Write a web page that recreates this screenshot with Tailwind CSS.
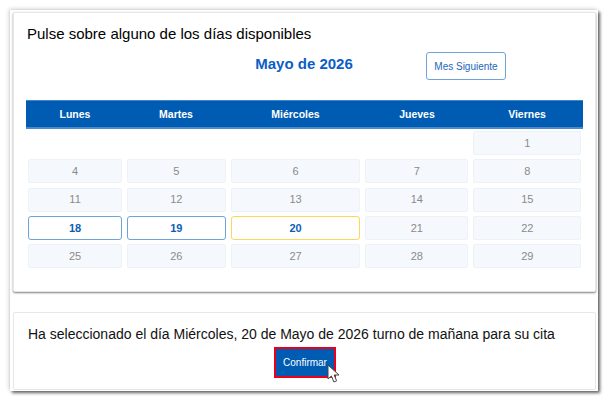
<!DOCTYPE html>
<html lang="es">
<head>
    <meta charset="UTF-8">
    <title>Calendario de citas</title>
    <script src="https://cdn.jsdelivr.net/npm/@tailwindcss/browser@4"></script>
</head>
<body class="bg-white font-['Liberation_Sans',Arial,sans-serif]">
    <div class="w-[609px] h-[402px] pt-[10px] pl-[10px] overflow-hidden">
        <div class="w-[588px] h-[381px] pt-[2px] pl-[3px] bg-white shadow-[2px_2px_3px_rgba(0,0,0,0.6),-1px_-1px_4px_rgba(0,0,0,0.18)]">
            <!-- Calendar card -->
            <div class="w-[583px] h-[280px] pt-[11px] px-[12px] bg-white border border-gray-200 rounded-[2px] shadow-[0_1px_2px_rgba(0,0,0,0.5)]">
                <p class="pl-[1px] text-[15px] leading-[20px] text-black">Pulse sobre alguno de los días disponibles</p>

                <div class="relative h-[48px] mt-[8px]">
                    <h2 class="w-[556px] mt-[1px] inline-block text-center text-[15px] leading-[22px] font-bold text-[#0b5ec4]">Mayo de 2026</h2>
                    <button class="absolute left-[400px] top-0 w-[80px] h-[28px] bg-white border border-[#6ea3d8] rounded-[3px] text-[10px] text-[#1e66b8]">Mes Siguiente</button>
                </div>

                <div class="grid grid-cols-[98px_104px_135px_108px_112px] w-[557px] h-[29px] pt-[1px] items-center bg-[#005cb3] border-t border-b-2 border-t-[#3f84c8] border-b-[#4a8bcb] text-[10.5px] font-bold text-white text-center">
                    <span>Lunes</span>
                    <span>Martes</span>
                    <span>Miércoles</span>
                    <span>Jueves</span>
                    <span>Viernes</span>
                </div>

                <div class="grid grid-cols-[93.5px_99px_129.5px_103px_108px] auto-rows-[24px] gap-x-[5px] gap-y-[4.3px] w-[557px] mt-[2px] pl-[2.3px] text-[11px] text-center">
                    <div class="col-start-5 flex items-center justify-center bg-[#f5f9fd] border border-[#edf2f7] rounded-[2px] text-[#8a8a8a]">1</div>

                    <div class="flex items-center justify-center bg-[#f5f9fd] border border-[#edf2f7] rounded-[2px] text-[#8a8a8a]">4</div>
                    <div class="flex items-center justify-center bg-[#f5f9fd] border border-[#edf2f7] rounded-[2px] text-[#8a8a8a]">5</div>
                    <div class="flex items-center justify-center bg-[#f5f9fd] border border-[#edf2f7] rounded-[2px] text-[#8a8a8a]">6</div>
                    <div class="flex items-center justify-center bg-[#f5f9fd] border border-[#edf2f7] rounded-[2px] text-[#8a8a8a]">7</div>
                    <div class="flex items-center justify-center bg-[#f5f9fd] border border-[#edf2f7] rounded-[2px] text-[#8a8a8a]">8</div>

                    <div class="flex items-center justify-center bg-[#f5f9fd] border border-[#edf2f7] rounded-[2px] text-[#8a8a8a]">11</div>
                    <div class="flex items-center justify-center bg-[#f5f9fd] border border-[#edf2f7] rounded-[2px] text-[#8a8a8a]">12</div>
                    <div class="flex items-center justify-center bg-[#f5f9fd] border border-[#edf2f7] rounded-[2px] text-[#8a8a8a]">13</div>
                    <div class="flex items-center justify-center bg-[#f5f9fd] border border-[#edf2f7] rounded-[2px] text-[#8a8a8a]">14</div>
                    <div class="flex items-center justify-center bg-[#f5f9fd] border border-[#edf2f7] rounded-[2px] text-[#8a8a8a]">15</div>

                    <div class="flex items-center justify-center bg-white border border-[#6ea3d8] rounded-[3px] font-bold text-[#0b5eb5]">18</div>
                    <div class="flex items-center justify-center bg-white border border-[#6ea3d8] rounded-[3px] font-bold text-[#0b5eb5]">19</div>
                    <div class="flex items-center justify-center bg-white border border-[#fbd85a] rounded-[3px] font-bold text-[#0b5eb5]">20</div>
                    <div class="flex items-center justify-center bg-[#f5f9fd] border border-[#edf2f7] rounded-[2px] text-[#8a8a8a]">21</div>
                    <div class="flex items-center justify-center bg-[#f5f9fd] border border-[#edf2f7] rounded-[2px] text-[#8a8a8a]">22</div>

                    <div class="flex items-center justify-center bg-[#f5f9fd] border border-[#edf2f7] rounded-[2px] text-[#8a8a8a]">25</div>
                    <div class="flex items-center justify-center bg-[#f5f9fd] border border-[#edf2f7] rounded-[2px] text-[#8a8a8a]">26</div>
                    <div class="flex items-center justify-center bg-[#f5f9fd] border border-[#edf2f7] rounded-[2px] text-[#8a8a8a]">27</div>
                    <div class="flex items-center justify-center bg-[#f5f9fd] border border-[#edf2f7] rounded-[2px] text-[#8a8a8a]">28</div>
                    <div class="flex items-center justify-center bg-[#f5f9fd] border border-[#edf2f7] rounded-[2px] text-[#8a8a8a]">29</div>
                </div>
            </div>

            <!-- Confirmation card -->
            <div class="w-[583px] h-[78px] mt-[20px] pt-[11px] pl-[14px] bg-white border border-gray-200 rounded-[2px]">
                <p class="text-[14px] leading-[20px] text-[#111]">Ha seleccionado el día Miércoles, 20 de Mayo de 2026 turno de mañana para su cita</p>
                <div class="relative w-[62px] h-[31px] mt-[3px] ml-[246px]">
                    <button class="w-full h-full bg-[#005cb3] border-2 border-[#ea0018] text-[10px] text-white">Confirmar</button>
                    <svg class="absolute left-[53px] top-[17px]" width="13" height="19" viewBox="0 0 13 19">
                        <path d="M1 1 L1 15 L4.4 12 L6.9 18 L9.6 16.8 L7.2 11 L12 11 Z" fill="#fff" stroke="#444" stroke-width="1" stroke-linejoin="round"/>
                    </svg>
                </div>
            </div>
        </div>
    </div>
</body>
</html>
